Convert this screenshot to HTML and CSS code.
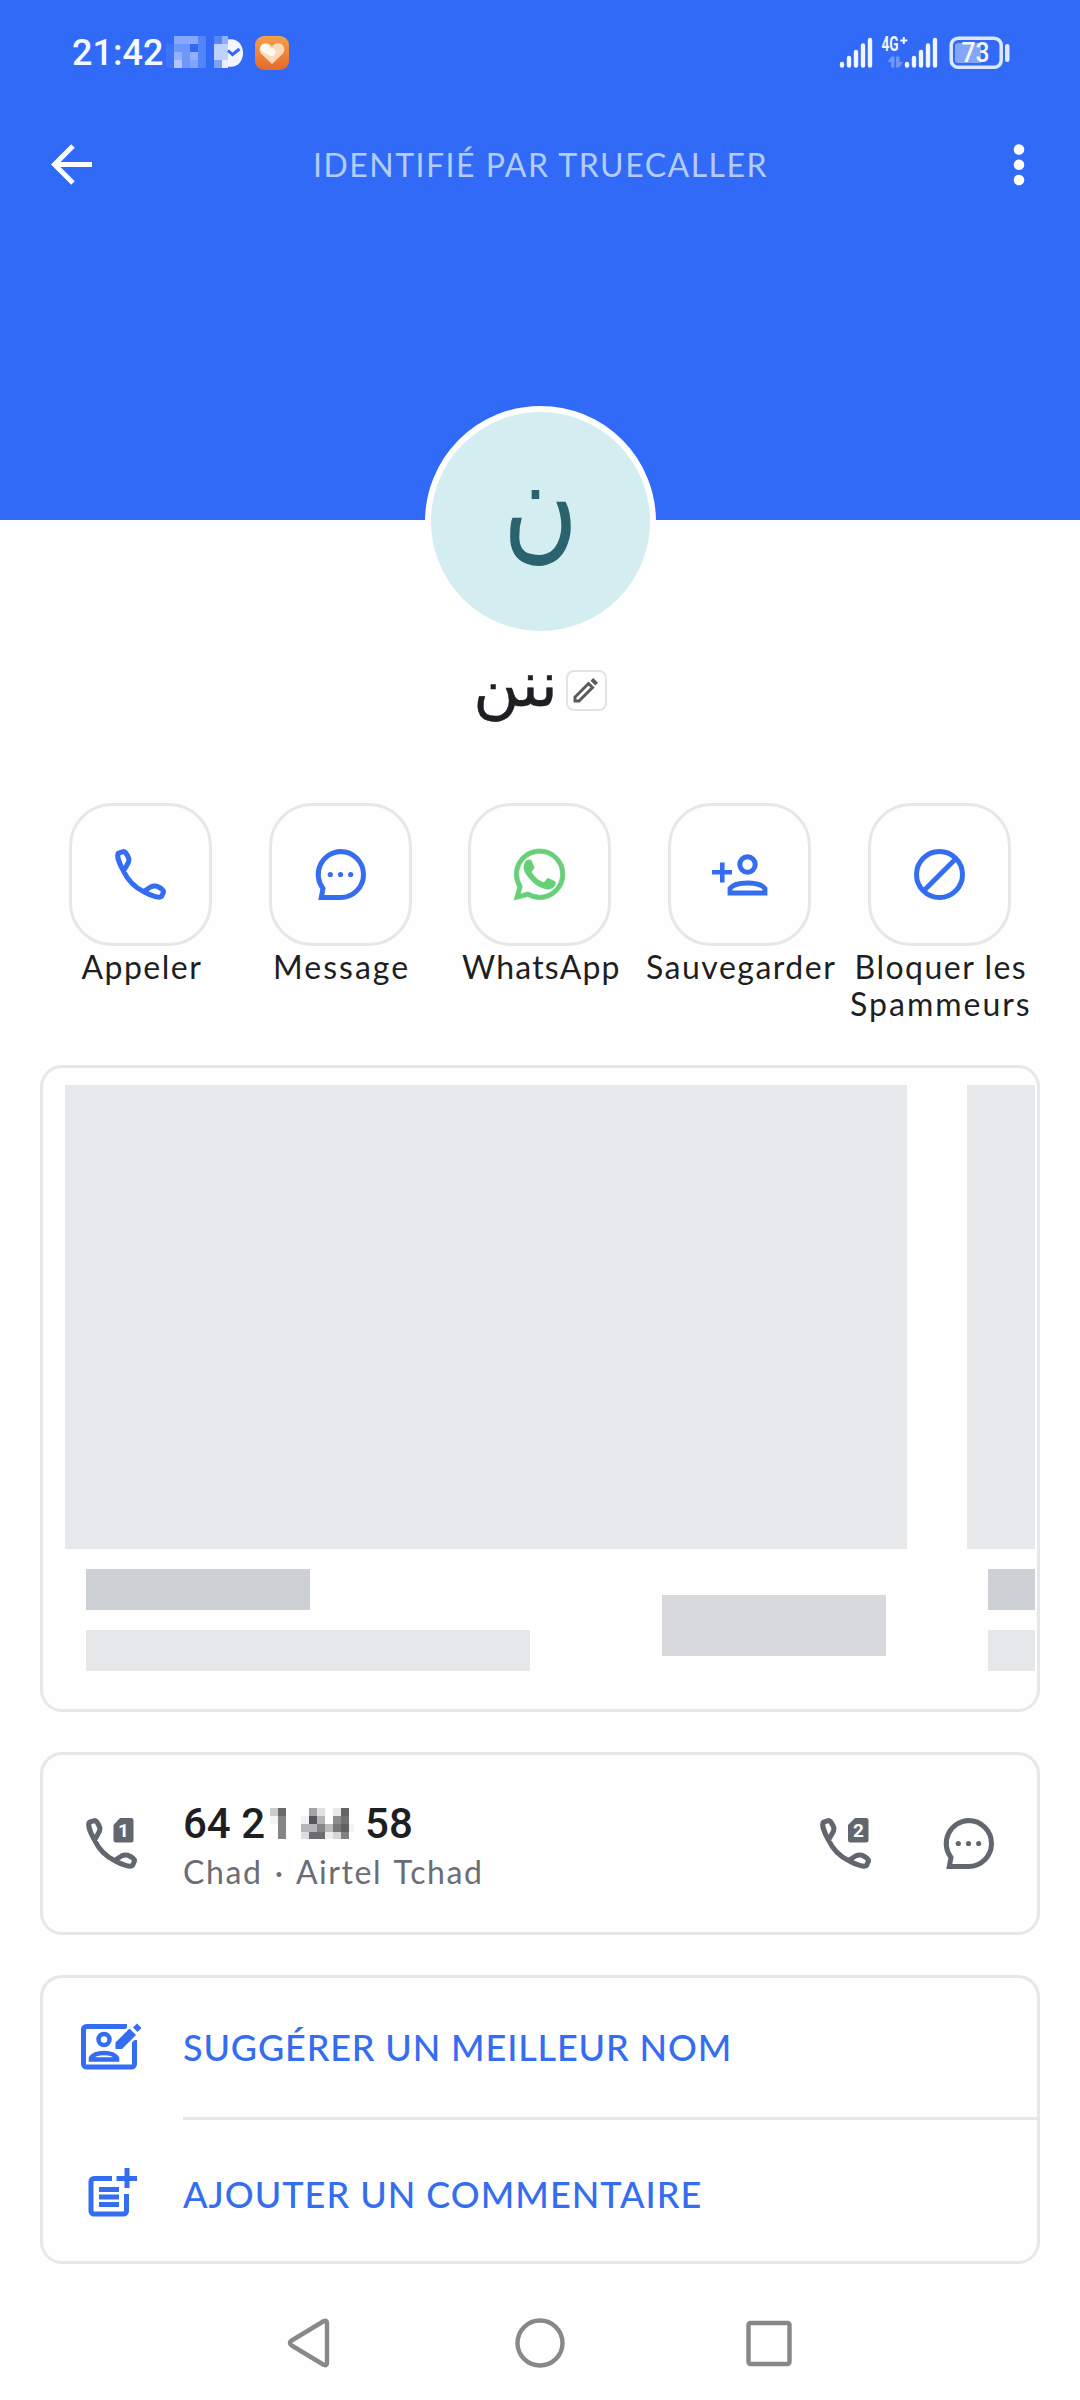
FILE: index.html
```html
<!DOCTYPE html>
<html lang="fr">
<head>
<meta charset="utf-8">
<title>Contact</title>
<link rel="stylesheet" href="styles.css">
</head>
<body>
<svg class="defs" aria-hidden="true">
  <symbol id="phone" viewBox="0 0 51 51">
    <path d="M8.5 22 C2.8 12 2 5.5 3.5 4.2 L8.5 2.6 C10 2.6 12 5 13.8 9.5 C14.2 12 13.5 13.5 12.5 15 Z M28.500 42.500 C38 48 45 49 46.500 47.500 L48.500 43 C48.500 41 45 38.500 41.500 37.200 C39.500 36.600 37.500 37 35.500 38 Z M8.500 22 Q15 36 28.500 42.500" fill="none" stroke="currentColor" stroke-width="5" stroke-linejoin="round"/>
  </symbol>
  <symbol id="message" viewBox="0 0 51 51">
    <path d="M25.500 2.500 A23 23 0 0 1 25.500 48.500 H6.300 L8 39.500 A23 23 0 0 1 25.500 2.500 Z" fill="none" stroke="currentColor" stroke-width="5"/>
    <g fill="currentColor"><circle cx="15.300" cy="25.500" r="2.600"/><circle cx="25.500" cy="25.500" r="2.600"/><circle cx="35.700" cy="25.500" r="2.600"/></g>
  </symbol>
</svg>

<header class="top">
  <div class="status">
    <span class="clock">21:42</span>
    <svg class="notif" viewBox="0 0 126 34" width="126" height="34">
      <g shape-rendering="crispEdges">
        <path fill="#3d74f7" d="M0 8h8v24H0z"/>
        <path fill="#86a9fa" d="M8 0h24v8H8z"/><path fill="#5285f8" d="M32 0h8v32h-8z"/>
        <path fill="#6d96fa" d="M8 8h16v8H8z"/><path fill="#3068ef" d="M24 8h8v8h-8z"/>
        <path fill="#91b1fa" d="M8 16h8v8H8zM24 16h8v8h-8z"/><path fill="#6f97f9" d="M16 16h8v16h-8z"/>
        <path fill="#b1c7fc" d="M8 24h8v8H8z"/><path fill="#80a4fa" d="M24 24h8v8h-8z"/>
        <path fill="#5487f8" d="M48 0h8v8h-8z"/><path fill="#91b0fb" d="M56 0h6v8h-6z"/>
        <path fill="#c0d1fd" d="M48 8h14v16H48z"/><path fill="#7ca1fa" d="M48 24h8v8h-8z"/><path fill="#e9effe" d="M56 24h6v8h-6z"/>
      </g>
      <path fill="#f3f6ff" d="M62 3.500 C82 0 82 34 62 30.500z"/>
      <path d="M62 14.500 l4.500 4 7-5.500" fill="none" stroke="#3068f4" stroke-width="3"/>
      <rect x="89" y="0" width="34" height="34" rx="9" fill="url(#orange)"/>
      <path d="M106 28 L95 17.500 C90 10 100 3 106 10.500 C112 3 122 10 117 17.500Z" fill="#fbd9bb"/>
      <path d="M98.500 12 l7 4" stroke="#fff8ef" stroke-width="8" stroke-linecap="round"/>
      <defs><linearGradient id="orange" x2="0" y2="1"><stop stop-color="#f3a04a"/><stop offset="1" stop-color="#e76a2d"/></linearGradient></defs>
    </svg>
    <svg class="signals" viewBox="0 0 174 36" width="174" height="36">
      <g stroke="#f1f5ff" stroke-width="4.400" stroke-linecap="round">
        <path d="M3 28v1.500M10 22v7.500M17 16v13.500M24 9.500v20M31 4v25.500M68 28v1.500M75 22v7.500M82 16v13.500M89 9.500v20M96 4v25.500"/>
      </g>
      <text x="42.500" y="15" class="net" textLength="17" lengthAdjust="spacingAndGlyphs">4G</text>
      <path d="M64.800 1v7M61.300 4.500h7" stroke="#f1f5ff" stroke-width="2"/>
      <path d="M48.500 26l4-5.500h3v11h-3.500v-5.500zM57 20.500h3.500v5.500h3.500l-4 5.500h-3z" fill="#6f96fa"/>
      <rect x="112.200" y="2.200" width="50" height="29" rx="7" fill="none" stroke="#dde7ff" stroke-width="3.500"/>
      <path d="M119 7h23v20h-23a3 3 0 0 1-3-3V10a3 3 0 0 1 3-3z" fill="#83a6fb"/>
      <rect x="166" y="8" width="4.500" height="18" rx="2" fill="#dde7ff"/>
      <text x="122.500" y="26" class="pct" textLength="28" lengthAdjust="spacingAndGlyphs">73</text>
    </svg>
  </div>
  <div class="appbar">
    <svg viewBox="0 0 42 42" width="42" height="42"><path d="M41 20.500H4M22 2L3.500 20.500 22 39" fill="none" stroke="#fff" stroke-width="5"/></svg>
    <h1 class="title">IDENTIFIÉ PAR TRUECALLER</h1>
    <svg viewBox="0 0 12 42" width="12" height="42" fill="#fff"><circle cx="6" cy="5.500" r="5.300"/><circle cx="6" cy="20.700" r="5.300"/><circle cx="6" cy="36" r="5.300"/></svg>
  </div>
</header>

<main>
  <div class="avatar"><span class="initial">ن</span></div>
  <div class="name">
    <span class="name-text" dir="rtl">ننن</span>
    <span class="edit"><svg viewBox="0 0 26 26" width="26" height="26"><path d="M2 24V20L15.500 6.500 19.500 10.500 6 24Z" fill="none" stroke="#5b5b5b" stroke-width="3"/><path d="M17.500 3.800L20.300 1 25 5.700 22.200 8.500Z" fill="#5b5b5b"/></svg></span>
  </div>

  <nav class="actions">
    <a class="action"><span class="tile"><svg width="51" height="51"><use href="#phone"/></svg></span><span class="label">Appeler</span></a>
    <a class="action"><span class="tile"><svg width="51" height="51"><use href="#message"/></svg></span><span class="label wide">Message</span></a>
    <a class="action"><span class="tile green"><svg width="51" height="51" viewBox="0 0 24 24" fill="currentColor"><path d="M17.472 14.382c-.297-.149-1.758-.867-2.030-.967-.273-.099-.471-.148-.670.150-.197.297-.767.966-.940 1.164-.173.199-.347.223-.644.075-.297-.150-1.255-.463-2.390-1.475-.883-.788-1.480-1.761-1.653-2.059-.173-.297-.018-.458.130-.606.134-.133.298-.347.446-.520.149-.174.198-.298.298-.497.099-.198.050-.371-.025-.520-.075-.149-.669-1.612-.916-2.207-.242-.579-.487-.500-.669-.510-.173-.008-.371-.010-.570-.010-.198 0-.520.074-.792.372-.272.297-1.040 1.016-1.040 2.479 0 1.462 1.065 2.875 1.213 3.074.149.198 2.096 3.200 5.077 4.487.709.306 1.262.489 1.694.625.712.227 1.360.195 1.871.118.571-.085 1.758-.719 2.006-1.413.248-.694.248-1.289.173-1.413-.074-.124-.272-.198-.570-.347" transform="translate(-3 -3) scale(1.25)"/><path d="M12.051 21.785h-.004a9.870 9.870 0 01-5.031-1.378l-.361-.214-3.741.982.998-3.648-.235-.374a9.860 9.860 0 01-1.510-5.260c.001-5.450 4.436-9.884 9.888-9.884 2.640 0 5.122 1.030 6.988 2.898a9.825 9.825 0 012.893 6.994c-.003 5.450-4.437 9.884-9.885 9.884m8.413-18.297A11.815 11.815 0 0012.050 0C5.495 0 .160 5.335.157 11.892c0 2.096.547 4.142 1.588 5.945L.057 24l6.305-1.654a11.882 11.882 0 005.683 1.448h.005c6.554 0 11.890-5.335 11.893-11.893a11.821 11.821 0 00-3.480-8.413z" stroke="currentColor" stroke-width=".35"/></svg></span><span class="label tight">WhatsApp</span></a>
    <a class="action"><span class="tile"><svg width="56" height="42" viewBox="0 0 56 42"><path d="M0 18.200h20M10.300 8.500v20" stroke="currentColor" stroke-width="4.600"/><circle cx="35.500" cy="10.500" r="7.700" fill="none" stroke="currentColor" stroke-width="5"/><path d="M18 39V34.500Q22 29 35.500 29T53 34.500V39Z" fill="none" stroke="currentColor" stroke-width="4.800"/></svg></span><span class="label">Sauvegarder</span></a>
    <a class="action"><span class="tile"><svg width="51" height="51" viewBox="0 0 51 51" fill="none" stroke="currentColor" stroke-width="5"><circle cx="25.500" cy="25.500" r="23"/><path d="M9.500 42L42 9.500"/></svg></span><span class="label">Bloquer les<br><span class="wide">Spammeurs</span></span></a>
  </nav>

  <section class="card ad">
    <div class="ad-track">
      <div class="ad-item">
        <div class="ad-image"></div>
        <div class="ad-row"><div class="ad-lines"><i class="line short"></i><i class="line"></i></div><i class="ad-button"></i></div>
      </div>
      <div class="ad-item">
        <div class="ad-image"></div>
        <div class="ad-row"><div class="ad-lines"><i class="line short"></i><i class="line"></i></div><i class="ad-button"></i></div>
      </div>
    </div>
  </section>

  <section class="card number">
    <svg class="grey" width="51" height="51" viewBox="0 0 51 51"><use href="#phone"/><path d="M34 0H45a2.500 2.500 0 0 1 2.500 2.500V22a2.500 2.500 0 0 1-2.500 2.500H30a2.500 2.500 0 0 1-2.500-2.500V7Z" fill="currentColor"/><text class="sim" x="37.500" y="19">1</text></svg>
    <div class="number-text">
      <div class="digits"><span>64 2</span><svg viewBox="0 0 88 31" width="88" height="31" shape-rendering="crispEdges">
        <path fill="#ccc" d="M0 0h8v8H0z"/><path fill="#6a6a6c" d="M8 0h8v8H8z"/><path fill="#f4f4f4" d="M0 8h8v8H0z"/><path fill="#858587" d="M8 8h8v23H8z"/>
        <path fill="#a2a3a5" d="M39 0h8v8h-8z"/><path fill="#e0e0e1" d="M47 0h8v8h-8z"/><path fill="#e9e9ea" d="M63 0h8v8h-8z"/><path fill="#656567" d="M71 0h8v8h-8z"/>
        <path fill="#f1f1f2" d="M31 8h8v8h-8z"/><path fill="#56575a" d="M39 8h8v8h-8z"/><path fill="#b4b4b6" d="M47 8h8v8h-8z"/><path fill="#8d8d8f" d="M63 8h8v8h-8z"/><path fill="#727274" d="M71 8h8v8h-8z"/>
        <path fill="#b5b5b7" d="M31 16h16v8H31z"/><path fill="#858587" d="M47 16h8v8h-8z"/><path fill="#bcbcbe" d="M55 16h8v8h-8z"/><path fill="#79797b" d="M63 16h8v8h-8z"/><path fill="#616164" d="M71 16h8v8h-8z"/><path fill="#f3f3f3" d="M79 16h5v8h-5z"/>
        <path fill="#dedede" d="M31 24h8v7h-8z"/><path fill="#6d6d70" d="M39 24h16v7H39z"/><path fill="#ececed" d="M55 24h8v7h-8z"/><path fill="#d5d5d6" d="M63 24h8v7h-8z"/><path fill="#828284" d="M71 24h8v7h-8z"/>
      </svg><span>58</span></div>
      <div class="carrier">Chad · Airtel Tchad</div>
    </div>
    <svg class="grey" width="51" height="51" viewBox="0 0 51 51"><use href="#phone"/><path d="M35 0H46a2.500 2.500 0 0 1 2.500 2.500V22a2.500 2.500 0 0 1-2.500 2.500H30.500a2.500 2.500 0 0 1-2.500-2.500V7Z" fill="currentColor"/><text class="sim" x="38.500" y="19">2</text></svg>
    <svg class="grey msg" width="51" height="51"><use href="#message"/></svg>
  </section>

  <section class="card links">
    <a class="link"><span class="link-icon"><svg width="61" height="48" viewBox="0 0 61 48" fill="none" stroke="currentColor">
      <path d="M46 3.500H5.500a3 3 0 0 0-3 3V41a3 3 0 0 0 3 3H50.500a3 3 0 0 0 3-3V17" stroke-width="5"/>
      <circle cx="23" cy="16.500" r="5.500" stroke-width="4.500"/><path d="M10 36.500V35Q13 30 23 30T36 35V36.500Z" stroke-width="4.500"/>
      <path d="M34.500 26V19.500L48.500 5.500 55 12 41 26Z" fill="currentColor" stroke="#fefefe" stroke-width="5" paint-order="stroke"/><path d="M52 4.500L56 0.500 60.500 5 56.500 9Z" fill="currentColor" stroke="none"/></svg></span><span class="link-text">SUGGÉRER UN MEILLEUR NOM</span></a>
    <a class="link second"><span class="link-icon"><svg width="50" height="50" viewBox="0 0 50 50" fill="none" stroke="currentColor" stroke-width="5">
      <path d="M24 10.500H6a3 3 0 0 0-3 3V43a3 3 0 0 0 3 3H35.500a3 3 0 0 0 3-3V26"/><path d="M11 21.500H31M11 29H31M11 36.500H31"/><path d="M28.500 10.500H49M39 0V20"/></svg></span><span class="link-text">AJOUTER UN COMMENTAIRE</span></a>
  </section>
</main>

<footer class="navbar">
  <svg width="520" height="54" viewBox="0 0 520 54" fill="none" stroke="#888" stroke-width="4.400" stroke-linejoin="round"><path d="M10.500 24L42 5Q45 4 45 7V47Q45 50 42 49L10.500 30Q5.500 27 10.500 24Z"/><circle cx="258" cy="27" r="22.500"/><rect x="466.500" y="7" width="41" height="41" rx="2"/></svg>
</footer>
</body>
</html>
```
FILE: styles.css
```css
* { box-sizing: border-box; }
body { margin: 0; width: 1080px; height: 2400px; display: flex; flex-direction: column; background: #fefefe; font-family: Lato, "DejaVu Sans", sans-serif; color: #1d1f22; overflow: hidden; }
svg { display: block; flex: none; overflow: visible; }
.defs { position: absolute; width: 0; height: 0; }
h1 { margin: 0; font-weight: 400; }

.top { height: 520px; background: #306af7; flex: none; }
.status { height: 105px; padding: 32px 68px 0 72px; display: flex; align-items: flex-start; }
.clock { width: 94px; color: #f5f8ff; font: 500 36px/42px Roboto, sans-serif; }
.notif { margin-top: 4px; }
.signals { margin: 4px 0 0 auto; transform: translateX(1px); }
.net { font: 700 21px Roboto, sans-serif; fill: #f1f5ff; }
.pct { font: 500 27px Roboto, sans-serif; fill: #f5f8ff; }
.appbar { height: 120px; padding: 0 55px 0 51px; display: flex; align-items: center; }
.title { flex: 1; padding-right: 25px; text-align: center; color: #b4ccfd; font-size: 32px; line-height: 40px; letter-spacing: 1.5px; white-space: nowrap; }

main { display: flex; flex-direction: column; flex: none; }
.avatar { width: 231px; height: 231px; margin: -114px auto 0 425px; border: 6px solid #fefefe; border-radius: 50%; background: #d4edf0; color: #2a626d; display: flex; align-items: center; justify-content: center; font: 103px/1 "DejaVu Sans", sans-serif; }
.initial { transform: translateY(-17px) scaleY(1.18); }
.name { height: 80px; margin-top: 13px; display: flex; justify-content: center; align-items: center; gap: 8px; }
.name-text { margin-top: -11px; font: 63px/60px "DejaVu Sans", sans-serif; -webkit-text-stroke: 0.5px; }
.edit { width: 41px; height: 41px; border: 2px solid #e3e3e4; border-radius: 8px; display: flex; align-items: center; justify-content: center; }

.actions { margin: 73px 40px 0 40.5px; display: grid; grid-template-columns: repeat(5, 199.75px); }
.action { display: flex; flex-direction: column; align-items: center; }
.tile { width: 143px; height: 143px; border: 3px solid #e6e7e8; border-radius: 43px; color: #346df0; display: flex; align-items: center; justify-content: center; }
.green { color: #66cf77; }
.label { margin-top: 2px; height: 85px; padding-left: 3px; font-size: 32px; line-height: 37px; text-align: center; white-space: nowrap; letter-spacing: 1.5px; }
.wide { letter-spacing: 2px; }
.tight { letter-spacing: 1.2px; }

.card { margin: 0 40px; border: 3px solid #e6e7e8; border-radius: 22px; }
.ad { height: 647px; margin-top: 32px; padding: 17px 2px 0 22px; }
.ad-track { display: flex; gap: 60px; overflow: hidden; }
.ad-item { flex: none; width: 842px; }
.ad-image { height: 464px; background: #e7e8e9; }
.ad-row { padding: 20px 21px 0; display: flex; justify-content: space-between; align-items: center; }
.ad-lines { display: flex; flex-direction: column; gap: 20px; }
.line { width: 444px; height: 41px; background: #e6e7e8; }
.line.short { width: 224px; background: #cdd0d5; }
.ad-button { width: 224px; height: 61px; margin-top: 10px; background: #d8d9dd; }

.number { height: 183px; margin-top: 40px; padding: 0 43px; display: flex; align-items: center; }
.grey { color: #62666f; }
.sim { font: 700 19px Roboto, sans-serif; fill: #fff; text-anchor: middle; }
.number-text { flex: 1; margin-left: 46px; padding-top: 5px; }
.digits { display: flex; align-items: center; height: 50px; font: 500 42px/50px Roboto, sans-serif; }
.digits svg { margin: 0 7px 0 5px; }
.carrier { font-size: 32px; line-height: 45px; color: #6a6d76; letter-spacing: 1.6px; word-spacing: 2.5px; }
.msg { margin-left: 72px; }

.links { height: 289px; margin-top: 40px; }
.link { height: 140px; padding-left: 38px; display: flex; align-items: center; color: #346df0; }
.link-icon { width: 102px; display: flex; }
.link:first-child .link-icon { padding-bottom: 2px; }
.second { height: 150px; }
.second .link-icon { padding-left: 7px; }
.link-text { flex: 1; height: 143px; border-bottom: 3px solid #e6e7e8; line-height: 140px; font-size: 36px; font-weight: 500; letter-spacing: 0.85px; white-space: nowrap; }
.second .link-text { border: 0; height: 140px; padding-top: 1px; letter-spacing: 1px; }
.navbar { margin-top: 52px; padding-left: 282px; }
```
